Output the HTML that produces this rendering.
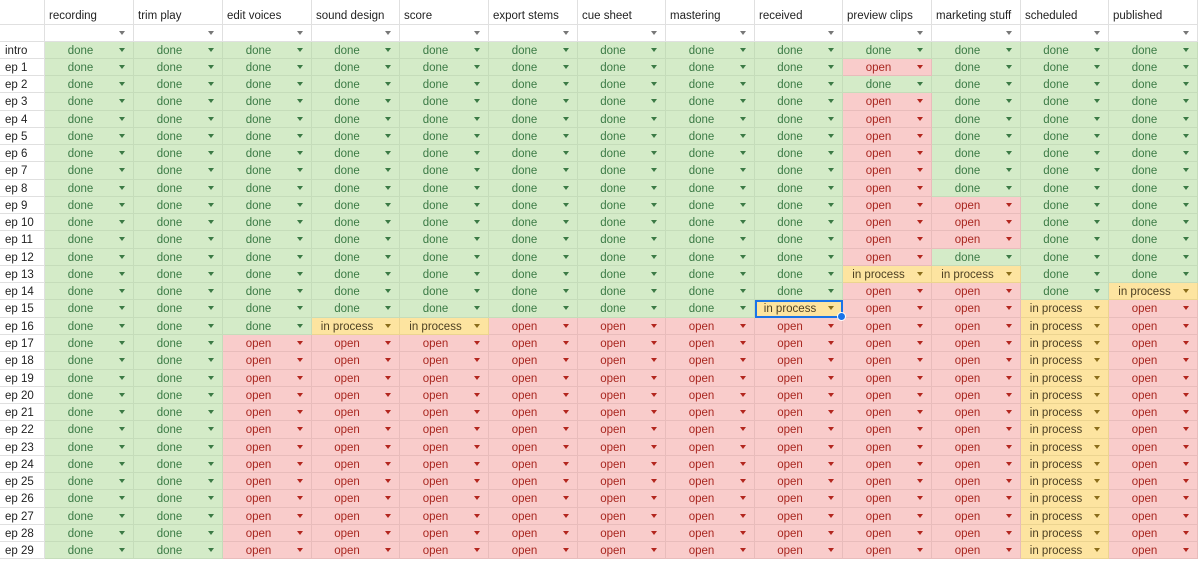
<!DOCTYPE html>
<html><head><meta charset="utf-8"><style>
*{box-sizing:border-box;margin:0;padding:0}
body{width:1200px;height:569px;overflow:hidden;background:#fff;font-family:"Liberation Sans",Arial,sans-serif;font-size:11.5px}
.gr{display:grid;grid-template-columns:45px 89px 89px 89px 88px 89px 89px 88px 89px 88px 89px 89px 88px 89px;grid-template-rows:25px 16.5px repeat(30,17.27px);margin-top:0}
.gr>div{border-right:1px solid #e0e0e0;border-bottom:1px solid #e0e0e0;position:relative;white-space:nowrap;overflow:visible}
.h{padding:9px 0 0 4px;color:#222;line-height:14px}
.f::after,.g::after,.r::after,.y::after{content:"";position:absolute;right:8px;top:6px;border-left:3.5px solid transparent;border-right:3.5px solid transparent;border-top:4px solid #777}
.l{padding:2px 0 0 5px;color:#222;line-height:14px}
.g,.r,.y{text-align:center;padding:2px 17px 0 0;line-height:14px}
.g{background:#d4ebc8;color:#3b7a45;border-color:#c5dcba!important}
.g::after{border-top-color:#3b7a45}
.r{background:#f9cccb;color:#a8261f;border-color:#e8bcbb!important}
.r::after{border-top-color:#b3261e}
.y{background:#fde4a0;color:#4d4023;border-color:#ecd490!important}
.y::after{border-top-color:#8a6d1a}
.sel{outline:2px solid #1a73e8;outline-offset:-2px;z-index:2}
.sel::before{content:"";position:absolute;right:-4px;bottom:-4px;width:7px;height:7px;border-radius:50%;background:#1a73e8;border:1px solid #fff;z-index:3}
</style></head><body>
<div class="gr">
<div></div><div class="h">recording</div><div class="h">trim play</div><div class="h">edit voices</div><div class="h">sound design</div><div class="h">score</div><div class="h">export stems</div><div class="h">cue sheet</div><div class="h">mastering</div><div class="h">received</div><div class="h">preview clips</div><div class="h">marketing stuff</div><div class="h">scheduled</div><div class="h">published</div>
<div></div><div class="f"></div><div class="f"></div><div class="f"></div><div class="f"></div><div class="f"></div><div class="f"></div><div class="f"></div><div class="f"></div><div class="f"></div><div class="f"></div><div class="f"></div><div class="f"></div><div class="f"></div>
<div class="l">intro</div><div class="g">done</div><div class="g">done</div><div class="g">done</div><div class="g">done</div><div class="g">done</div><div class="g">done</div><div class="g">done</div><div class="g">done</div><div class="g">done</div><div class="g">done</div><div class="g">done</div><div class="g">done</div><div class="g">done</div>
<div class="l">ep 1</div><div class="g">done</div><div class="g">done</div><div class="g">done</div><div class="g">done</div><div class="g">done</div><div class="g">done</div><div class="g">done</div><div class="g">done</div><div class="g">done</div><div class="r">open</div><div class="g">done</div><div class="g">done</div><div class="g">done</div>
<div class="l">ep 2</div><div class="g">done</div><div class="g">done</div><div class="g">done</div><div class="g">done</div><div class="g">done</div><div class="g">done</div><div class="g">done</div><div class="g">done</div><div class="g">done</div><div class="g">done</div><div class="g">done</div><div class="g">done</div><div class="g">done</div>
<div class="l">ep 3</div><div class="g">done</div><div class="g">done</div><div class="g">done</div><div class="g">done</div><div class="g">done</div><div class="g">done</div><div class="g">done</div><div class="g">done</div><div class="g">done</div><div class="r">open</div><div class="g">done</div><div class="g">done</div><div class="g">done</div>
<div class="l">ep 4</div><div class="g">done</div><div class="g">done</div><div class="g">done</div><div class="g">done</div><div class="g">done</div><div class="g">done</div><div class="g">done</div><div class="g">done</div><div class="g">done</div><div class="r">open</div><div class="g">done</div><div class="g">done</div><div class="g">done</div>
<div class="l">ep 5</div><div class="g">done</div><div class="g">done</div><div class="g">done</div><div class="g">done</div><div class="g">done</div><div class="g">done</div><div class="g">done</div><div class="g">done</div><div class="g">done</div><div class="r">open</div><div class="g">done</div><div class="g">done</div><div class="g">done</div>
<div class="l">ep 6</div><div class="g">done</div><div class="g">done</div><div class="g">done</div><div class="g">done</div><div class="g">done</div><div class="g">done</div><div class="g">done</div><div class="g">done</div><div class="g">done</div><div class="r">open</div><div class="g">done</div><div class="g">done</div><div class="g">done</div>
<div class="l">ep 7</div><div class="g">done</div><div class="g">done</div><div class="g">done</div><div class="g">done</div><div class="g">done</div><div class="g">done</div><div class="g">done</div><div class="g">done</div><div class="g">done</div><div class="r">open</div><div class="g">done</div><div class="g">done</div><div class="g">done</div>
<div class="l">ep 8</div><div class="g">done</div><div class="g">done</div><div class="g">done</div><div class="g">done</div><div class="g">done</div><div class="g">done</div><div class="g">done</div><div class="g">done</div><div class="g">done</div><div class="r">open</div><div class="g">done</div><div class="g">done</div><div class="g">done</div>
<div class="l">ep 9</div><div class="g">done</div><div class="g">done</div><div class="g">done</div><div class="g">done</div><div class="g">done</div><div class="g">done</div><div class="g">done</div><div class="g">done</div><div class="g">done</div><div class="r">open</div><div class="r">open</div><div class="g">done</div><div class="g">done</div>
<div class="l">ep 10</div><div class="g">done</div><div class="g">done</div><div class="g">done</div><div class="g">done</div><div class="g">done</div><div class="g">done</div><div class="g">done</div><div class="g">done</div><div class="g">done</div><div class="r">open</div><div class="r">open</div><div class="g">done</div><div class="g">done</div>
<div class="l">ep 11</div><div class="g">done</div><div class="g">done</div><div class="g">done</div><div class="g">done</div><div class="g">done</div><div class="g">done</div><div class="g">done</div><div class="g">done</div><div class="g">done</div><div class="r">open</div><div class="r">open</div><div class="g">done</div><div class="g">done</div>
<div class="l">ep 12</div><div class="g">done</div><div class="g">done</div><div class="g">done</div><div class="g">done</div><div class="g">done</div><div class="g">done</div><div class="g">done</div><div class="g">done</div><div class="g">done</div><div class="r">open</div><div class="g">done</div><div class="g">done</div><div class="g">done</div>
<div class="l">ep 13</div><div class="g">done</div><div class="g">done</div><div class="g">done</div><div class="g">done</div><div class="g">done</div><div class="g">done</div><div class="g">done</div><div class="g">done</div><div class="g">done</div><div class="y">in process</div><div class="y">in process</div><div class="g">done</div><div class="g">done</div>
<div class="l">ep 14</div><div class="g">done</div><div class="g">done</div><div class="g">done</div><div class="g">done</div><div class="g">done</div><div class="g">done</div><div class="g">done</div><div class="g">done</div><div class="g">done</div><div class="r">open</div><div class="r">open</div><div class="g">done</div><div class="y">in process</div>
<div class="l">ep 15</div><div class="g">done</div><div class="g">done</div><div class="g">done</div><div class="g">done</div><div class="g">done</div><div class="g">done</div><div class="g">done</div><div class="g">done</div><div class="y sel">in process</div><div class="r">open</div><div class="r">open</div><div class="y">in process</div><div class="r">open</div>
<div class="l">ep 16</div><div class="g">done</div><div class="g">done</div><div class="g">done</div><div class="y">in process</div><div class="y">in process</div><div class="r">open</div><div class="r">open</div><div class="r">open</div><div class="r">open</div><div class="r">open</div><div class="r">open</div><div class="y">in process</div><div class="r">open</div>
<div class="l">ep 17</div><div class="g">done</div><div class="g">done</div><div class="r">open</div><div class="r">open</div><div class="r">open</div><div class="r">open</div><div class="r">open</div><div class="r">open</div><div class="r">open</div><div class="r">open</div><div class="r">open</div><div class="y">in process</div><div class="r">open</div>
<div class="l">ep 18</div><div class="g">done</div><div class="g">done</div><div class="r">open</div><div class="r">open</div><div class="r">open</div><div class="r">open</div><div class="r">open</div><div class="r">open</div><div class="r">open</div><div class="r">open</div><div class="r">open</div><div class="y">in process</div><div class="r">open</div>
<div class="l">ep 19</div><div class="g">done</div><div class="g">done</div><div class="r">open</div><div class="r">open</div><div class="r">open</div><div class="r">open</div><div class="r">open</div><div class="r">open</div><div class="r">open</div><div class="r">open</div><div class="r">open</div><div class="y">in process</div><div class="r">open</div>
<div class="l">ep 20</div><div class="g">done</div><div class="g">done</div><div class="r">open</div><div class="r">open</div><div class="r">open</div><div class="r">open</div><div class="r">open</div><div class="r">open</div><div class="r">open</div><div class="r">open</div><div class="r">open</div><div class="y">in process</div><div class="r">open</div>
<div class="l">ep 21</div><div class="g">done</div><div class="g">done</div><div class="r">open</div><div class="r">open</div><div class="r">open</div><div class="r">open</div><div class="r">open</div><div class="r">open</div><div class="r">open</div><div class="r">open</div><div class="r">open</div><div class="y">in process</div><div class="r">open</div>
<div class="l">ep 22</div><div class="g">done</div><div class="g">done</div><div class="r">open</div><div class="r">open</div><div class="r">open</div><div class="r">open</div><div class="r">open</div><div class="r">open</div><div class="r">open</div><div class="r">open</div><div class="r">open</div><div class="y">in process</div><div class="r">open</div>
<div class="l">ep 23</div><div class="g">done</div><div class="g">done</div><div class="r">open</div><div class="r">open</div><div class="r">open</div><div class="r">open</div><div class="r">open</div><div class="r">open</div><div class="r">open</div><div class="r">open</div><div class="r">open</div><div class="y">in process</div><div class="r">open</div>
<div class="l">ep 24</div><div class="g">done</div><div class="g">done</div><div class="r">open</div><div class="r">open</div><div class="r">open</div><div class="r">open</div><div class="r">open</div><div class="r">open</div><div class="r">open</div><div class="r">open</div><div class="r">open</div><div class="y">in process</div><div class="r">open</div>
<div class="l">ep 25</div><div class="g">done</div><div class="g">done</div><div class="r">open</div><div class="r">open</div><div class="r">open</div><div class="r">open</div><div class="r">open</div><div class="r">open</div><div class="r">open</div><div class="r">open</div><div class="r">open</div><div class="y">in process</div><div class="r">open</div>
<div class="l">ep 26</div><div class="g">done</div><div class="g">done</div><div class="r">open</div><div class="r">open</div><div class="r">open</div><div class="r">open</div><div class="r">open</div><div class="r">open</div><div class="r">open</div><div class="r">open</div><div class="r">open</div><div class="y">in process</div><div class="r">open</div>
<div class="l">ep 27</div><div class="g">done</div><div class="g">done</div><div class="r">open</div><div class="r">open</div><div class="r">open</div><div class="r">open</div><div class="r">open</div><div class="r">open</div><div class="r">open</div><div class="r">open</div><div class="r">open</div><div class="y">in process</div><div class="r">open</div>
<div class="l">ep 28</div><div class="g">done</div><div class="g">done</div><div class="r">open</div><div class="r">open</div><div class="r">open</div><div class="r">open</div><div class="r">open</div><div class="r">open</div><div class="r">open</div><div class="r">open</div><div class="r">open</div><div class="y">in process</div><div class="r">open</div>
<div class="l">ep 29</div><div class="g">done</div><div class="g">done</div><div class="r">open</div><div class="r">open</div><div class="r">open</div><div class="r">open</div><div class="r">open</div><div class="r">open</div><div class="r">open</div><div class="r">open</div><div class="r">open</div><div class="y">in process</div><div class="r">open</div>
</div>
</body></html>
